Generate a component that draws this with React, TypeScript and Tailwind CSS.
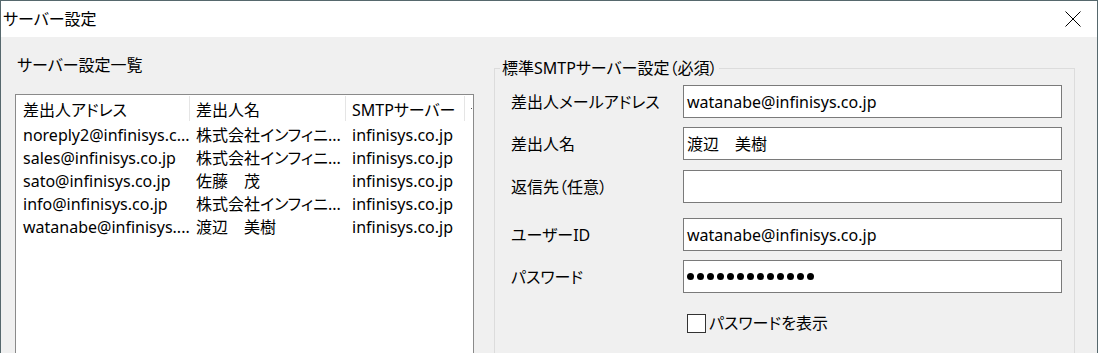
import React from "react";

const rows = [
  ["noreply2@infinisys.c...", "株式会社インフィニ...", "infinisys.co.jp"],
  ["sales@infinisys.co.jp", "株式会社インフィニ...", "infinisys.co.jp"],
  ["sato@infinisys.co.jp", "佐藤　茂", "infinisys.co.jp"],
  ["info@infinisys.co.jp", "株式会社インフィニ...", "infinisys.co.jp"],
  ["watanabe@infinisys....", "渡辺　美樹", "infinisys.co.jp"],
];

export default function App() {
  const labels = ["差出人メールアドレス", "差出人名", "返信先（任意）", "ユーザーID", "パスワード"];
  const values: React.ReactNode[] = [
    "watanabe@infinisys.co.jp",
    "渡辺　美樹",
    "",
    "watanabe@infinisys.co.jp",
    <div className="flex gap-[3px]">
      {Array.from({ length: 13 }).map((_, i) => (
        <span key={i} className="block w-[7px] h-[7px] rounded-full bg-black" />
      ))}
    </div>,
  ];
  const mts = ["mt-0", "mt-[9px]", "mt-[10px]", "mt-[15px]", "mt-[9px]"];
  return (
    <div className="w-[1098px] h-[353px] overflow-hidden border-x border-t border-[#56686d] bg-[#f0f0f0] flex flex-col text-[16px] text-black font-['Noto_Sans','Noto_Sans_CJK_JP',sans-serif] [font-feature-settings:'palt'] leading-[20px]">
      {/* title bar */}
      <div className="h-[36px] shrink-0 bg-white flex items-center justify-between pl-[2px] pr-[16px]">
        <span>サーバー設定</span>
        <svg width="16" height="16" viewBox="0 0 16 16" className="block">
          <path d="M0.5 0.5 L15.5 15.5 M15.5 0.5 L0.5 15.5" stroke="#000" strokeWidth="1" fill="none" />
        </svg>
      </div>
      {/* body */}
      <div className="flex-1 flex pl-[14px] gap-[20px]">
        {/* left */}
        <div className="w-[459px] shrink-0 flex flex-col pt-[18px]">
          <div className="pl-[2px] h-[20px]">サーバー設定一覧</div>
          <div className="mt-[19px] h-[300px] border border-[#8a8a8a] bg-white overflow-hidden">
            <div className="flex h-[28px] pt-[1px] whitespace-nowrap">
              <div className="w-[174px] shrink-0 border-r border-[#e5e5e5] pl-[7px] h-[25px] pt-[2px] flex items-center">差出人アドレス</div>
              <div className="w-[156px] shrink-0 border-r border-[#e5e5e5] pl-[6px] h-[25px] pt-[2px] flex items-center">差出人名</div>
              <div className="w-[119px] shrink-0 border-r border-[#e5e5e5] pl-[6px] h-[25px] pt-[2px] flex items-center">SMTPサーバー</div>
              <div className="w-[8px] shrink-0 h-[25px] flex items-center pl-[6px]">
                <span className="block w-[1px] h-[1px] bg-[#555555]" />
              </div>
            </div>
            {rows.map((r, i) => (
              <div key={i} className="flex h-[23px] items-center whitespace-nowrap">
                <div className="w-[174px] shrink-0 pl-[7px] overflow-hidden">{r[0]}</div>
                <div className="w-[156px] shrink-0 pl-[6px] overflow-hidden">{r[1]}</div>
                <div className="w-[119px] shrink-0 pl-[6px] overflow-hidden">{r[2]}</div>
              </div>
            ))}
          </div>
        </div>
        {/* right group box */}
        <div className="mt-[31px] w-[581px] h-[320px] shrink-0 border border-[#dcdcdc] relative pt-[16px] pr-[12px] pl-[16px]">
          <span className="absolute left-[5px] top-[-11px] px-[2px] bg-[#f0f0f0] whitespace-nowrap">標準SMTPサーバー設定（必須）</span>
          {labels.map((l, i) => (
            <div key={i} className={`flex items-center ${mts[i]}`}>
              <div className="w-[172px] shrink-0 whitespace-nowrap">{l}</div>
              <div className="w-[379px] h-[33px] border border-[#7a7a7a] bg-white flex items-center pl-[3px] whitespace-nowrap">
                {values[i]}
              </div>
            </div>
          ))}
          <div className="flex items-center mt-[20px] pl-[176px]">
            <span className="block w-[19px] h-[19px] border border-[#333333] bg-white" />
            <span className="ml-[3px] whitespace-nowrap">パスワードを表示</span>
          </div>
        </div>
      </div>
    </div>
  );
}
